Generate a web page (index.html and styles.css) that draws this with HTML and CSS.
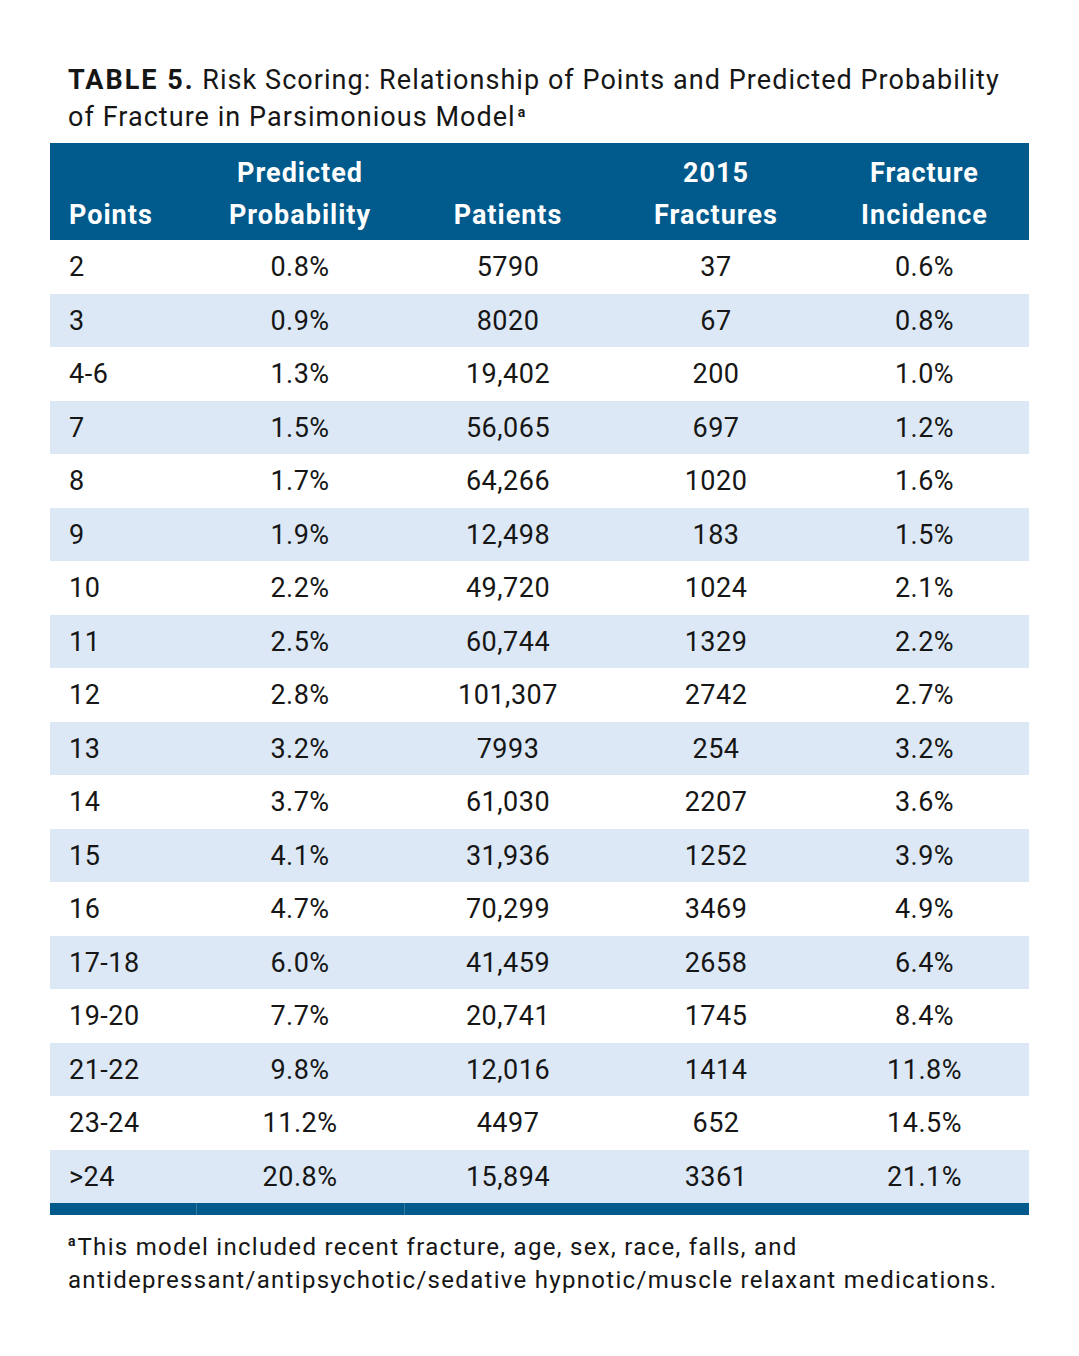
FILE: index.html
```html
<!DOCTYPE html>
<html lang="en">
<head>
<meta charset="utf-8">
<title>Table 5</title>
<link rel="stylesheet" href="styles.css">
</head>
<body>
<div class="page">
  <div class="caption"><span class="label">TABLE 5.</span> <span class="title">Risk Scoring: Relationship of Points and Predicted Probability of Fracture in Parsimonious Model</span><sup class="sup sup-end">a</sup></div>
  <table class="risk">
    <colgroup>
      <col class="c1"><col class="c2"><col class="c3"><col class="c4"><col class="c5">
    </colgroup>
    <thead>
      <tr>
        <th class="left">Points</th>
        <th>Predicted<br>Probability</th>
        <th>Patients</th>
        <th>2015<br>Fractures</th>
        <th>Fracture<br>Incidence</th>
      </tr>
    </thead>
    <tbody>
      <tr><td class="left">2</td><td>0.8%</td><td>5790</td><td>37</td><td>0.6%</td></tr>
      <tr><td class="left">3</td><td>0.9%</td><td>8020</td><td>67</td><td>0.8%</td></tr>
      <tr><td class="left">4-6</td><td>1.3%</td><td>19,402</td><td>200</td><td>1.0%</td></tr>
      <tr><td class="left">7</td><td>1.5%</td><td>56,065</td><td>697</td><td>1.2%</td></tr>
      <tr><td class="left">8</td><td>1.7%</td><td>64,266</td><td>1020</td><td>1.6%</td></tr>
      <tr><td class="left">9</td><td>1.9%</td><td>12,498</td><td>183</td><td>1.5%</td></tr>
      <tr><td class="left">10</td><td>2.2%</td><td>49,720</td><td>1024</td><td>2.1%</td></tr>
      <tr><td class="left">11</td><td>2.5%</td><td>60,744</td><td>1329</td><td>2.2%</td></tr>
      <tr><td class="left">12</td><td>2.8%</td><td>101,307</td><td>2742</td><td>2.7%</td></tr>
      <tr><td class="left">13</td><td>3.2%</td><td>7993</td><td>254</td><td>3.2%</td></tr>
      <tr><td class="left">14</td><td>3.7%</td><td>61,030</td><td>2207</td><td>3.6%</td></tr>
      <tr><td class="left">15</td><td>4.1%</td><td>31,936</td><td>1252</td><td>3.9%</td></tr>
      <tr><td class="left">16</td><td>4.7%</td><td>70,299</td><td>3469</td><td>4.9%</td></tr>
      <tr><td class="left">17-18</td><td>6.0%</td><td>41,459</td><td>2658</td><td>6.4%</td></tr>
      <tr><td class="left">19-20</td><td>7.7%</td><td>20,741</td><td>1745</td><td>8.4%</td></tr>
      <tr><td class="left">21-22</td><td>9.8%</td><td>12,016</td><td>1414</td><td>11.8%</td></tr>
      <tr><td class="left">23-24</td><td>11.2%</td><td>4497</td><td>652</td><td>14.5%</td></tr>
      <tr><td class="left">&gt;24</td><td>20.8%</td><td>15,894</td><td>3361</td><td>21.1%</td></tr>
    </tbody>
    <tfoot>
      <tr><td></td><td class="sep"></td><td class="sep"></td><td></td><td></td></tr>
    </tfoot>
  </table>
  <p class="note"><sup class="sup sup-start">a</sup>This model included recent fracture, age, sex, race, falls, and antidepressant/antipsychotic/sedative hypnotic/muscle relaxant medications.</p>
</div>
</body>
</html>
```

FILE: styles.css
```css
html, body {
  margin: 0;
  padding: 0;
  background: #ffffff;
}

body {
  font-family: Roboto, "Noto Sans", "Liberation Sans", sans-serif;
  color: #161616;
}

.page {
  width: 979px;
  margin-left: 50px;
  padding-top: 62px;
}

.caption {
  padding-left: 18px;
  font-size: 27px;
  line-height: 37px;
  letter-spacing: 1.05px;
  color: #161616;
}

.label {
  font-weight: 700;
  letter-spacing: 2px;
}

.sup {
  font-size: 14px;
  font-weight: 700;
  line-height: 14px;
  vertical-align: 9px;
  letter-spacing: 0;
}

.sup-end {
  margin-left: 2px;
}

.sup-start {
  margin-right: 2px;
}

.risk {
  margin-top: 7px;
  width: 979px;
  border-collapse: collapse;
  table-layout: fixed;
}

.c1 { width: 146px; }
.c2 { width: 208px; }
.c3 { width: 208px; }
.c4 { width: 208px; }
.c5 { width: 209px; }

.risk th {
  background: #005a8c;
  color: #ffffff;
  font-weight: 700;
  font-size: 27px;
  line-height: 42px;
  letter-spacing: 1px;
  padding: 9px 0 4px;
  text-align: center;
  vertical-align: bottom;
}

.risk td {
  font-size: 27px;
  line-height: 51.5px;
  padding: 2px 0 0;
  text-align: center;
  vertical-align: middle;
  letter-spacing: 0.5px;
  color: #161616;
}

.risk th.left,
.risk td.left {
  text-align: left;
  padding-left: 19px;
}

.risk tbody tr:nth-child(even) td {
  background: #dce8f5;
}

.risk tfoot td {
  background: #005a8c;
  height: 12px;
  line-height: 0;
  padding: 0;
}

.risk tfoot td.sep {
  border-left: 1px solid #3d7aa3;
}

.note {
  margin: 16px 0 0;
  padding-left: 18px;
  font-size: 24px;
  line-height: 33px;
  letter-spacing: 1.3px;
  color: #161616;
}
```
